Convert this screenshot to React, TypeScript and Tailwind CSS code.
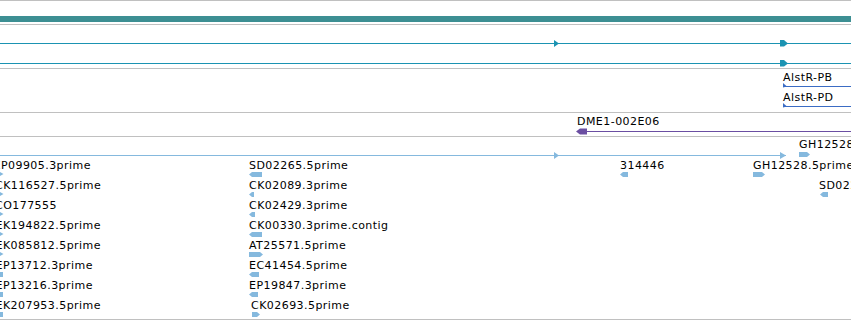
import React from "react";

type Label = { text: string; x: number; y: number };
type Glyph = { x0: number; x1: number; y: number; dir: "L" | "R" };

const BLUE_EST = "#85b9de";

function arrowPoints(g: Glyph, h = 5, head = 3): string {
  const top = g.y;
  const bot = g.y + h;
  const mid = g.y + h / 2;
  if (g.dir === "L") {
    return `${g.x0},${mid} ${g.x0 + head},${top} ${g.x1},${top} ${g.x1},${bot} ${g.x0 + head},${bot}`;
  }
  return `${g.x0},${top} ${g.x1 - head},${top} ${g.x1},${mid} ${g.x1 - head},${bot} ${g.x0},${bot}`;
}

function Labels({ items, origin }: { items: Label[]; origin: number }) {
  return (
    <>
      {items.map((l, i) => (
        <span
          key={i}
          className="absolute whitespace-nowrap text-black leading-[11px]"
          style={{ left: l.x, top: l.y - origin }}
        >
          {l.text}
        </span>
      ))}
    </>
  );
}

function Sep() {
  return <div className="h-px w-full shrink-0 bg-[#c0c0c0]" />;
}

const estLabels: Label[] = [
  { text: "GH12528.3prime", x: 799, y: 139 },
  { text: "EP09905.3prime", x: -6.5, y: 160 },
  { text: "SD02265.5prime", x: 249, y: 160 },
  { text: "314446", x: 620, y: 160 },
  { text: "GH12528.5prime", x: 753, y: 160 },
  { text: "CK116527.5prime", x: -5, y: 180 },
  { text: "CK02089.3prime", x: 249, y: 180 },
  { text: "SD02265.3prime", x: 819, y: 180 },
  { text: "CO177555", x: -5, y: 200 },
  { text: "CK02429.3prime", x: 249, y: 200 },
  { text: "EK194822.5prime", x: -4.5, y: 220 },
  { text: "CK00330.3prime.contig", x: 249, y: 220 },
  { text: "EK085812.5prime", x: -4.5, y: 240 },
  { text: "AT25571.5prime", x: 249, y: 240 },
  { text: "EP13712.3prime", x: -4.5, y: 260 },
  { text: "EC41454.5prime", x: 249, y: 260 },
  { text: "EP13216.3prime", x: -4.5, y: 280 },
  { text: "EP19847.3prime", x: 249, y: 280 },
  { text: "EK207953.5prime", x: -4.5, y: 300 },
  { text: "CK02693.5prime", x: 251, y: 300 },
];

const estGlyphs: Glyph[] = [
  { x0: 799, x1: 810, y: 152, dir: "R" },
  { x0: 249, x1: 262, y: 172, dir: "L" },
  { x0: 620, x1: 628, y: 172, dir: "L" },
  { x0: 753, x1: 765, y: 172, dir: "R" },
  { x0: 249, x1: 254, y: 192, dir: "L" },
  { x0: 820, x1: 828, y: 192, dir: "L" },
  { x0: 249, x1: 255, y: 212, dir: "L" },
  { x0: 249, x1: 262, y: 232, dir: "L" },
  { x0: 249, x1: 263, y: 252, dir: "R" },
  { x0: 249, x1: 259, y: 272, dir: "L" },
  { x0: 249, x1: 258, y: 292, dir: "L" },
  { x0: 252, x1: 260, y: 312, dir: "R" },
];

const leftTips = [172, 192, 212, 232, 252];
const leftBlocks = [272, 292, 312];

export default function App() {
  return (
    <div className="relative flex h-[320px] w-[851px] flex-col overflow-hidden bg-white font-['DejaVu_Sans',sans-serif] text-[11px] tracking-[0.45px]">
      <Sep />
      {/* Track 1: y 1..23 */}
      <div className="relative h-[23px] shrink-0">
        <div className="absolute left-0 right-0 top-[15px] h-[6px] bg-[#3d8f93]" />
      </div>
      <Sep />
      {/* Track 2: y 25..67 */}
      <div className="relative h-[43px] shrink-0">
        <svg className="absolute inset-0" width="851" height="43" shapeRendering="crispEdges">
          <g transform="translate(0,-25)" fill="#1b93b2">
            <rect x="0" y="43" width="851" height="1" />
            <rect x="0" y="63" width="851" height="1" />
            <polygon points="554,40 559,43.5 554,47" shapeRendering="auto" />
            <polygon points="780,40 784,40 788,43.5 784,46.5 780,46.5" shapeRendering="auto" />
            <polygon points="780,60 784,60 788,63.5 784,66.5 780,66.5" shapeRendering="auto" />
          </g>
        </svg>
      </div>
      <Sep />
      {/* Track 3: y 69..111 */}
      <div className="relative h-[43px] shrink-0">
        <Labels
          origin={69}
          items={[
            { text: "AlstR-PB", x: 783, y: 72 },
            { text: "AlstR-PD", x: 783, y: 92 },
          ]}
        />
        <svg className="absolute inset-0" width="851" height="43" shapeRendering="crispEdges">
          <g transform="translate(0,-69)" fill="#3b6cc4">
            <rect x="783" y="86" width="68" height="1" />
            <rect x="783" y="106" width="68" height="1" />
            <polygon points="783,83 787,86.5 783,87.5" shapeRendering="auto" />
            <polygon points="783,103 787,106.5 783,107.5" shapeRendering="auto" />
          </g>
        </svg>
      </div>
      <Sep />
      {/* Track 4: y 113..135 */}
      <div className="relative h-[23px] shrink-0">
        <Labels origin={113} items={[{ text: "DME1-002E06", x: 577, y: 116 }]} />
        <svg className="absolute inset-0" width="851" height="23" shapeRendering="crispEdges">
          <g transform="translate(0,-113)" fill="#6b4ea2">
            <rect x="584" y="131" width="267" height="1" />
            <polygon points="576,131.5 580,128.5 587,128.5 587,134.5 580,134.5" shapeRendering="auto" />
          </g>
        </svg>
      </div>
      <Sep />
      {/* Track 5: y 137..318 */}
      <div className="relative h-[182px] shrink-0">
        <Labels origin={137} items={estLabels} />
        <svg className="absolute inset-0" width="851" height="182">
          <g transform="translate(0,-137)" fill={BLUE_EST}>
            <rect x="0" y="155" width="786" height="1" shapeRendering="crispEdges" />
            <polygon points="554,152 559,155.5 554,159" />
            <polygon points="780,152 786,155.5 780,159" />
            {estGlyphs.map((g, i) => (
              <polygon key={i} points={arrowPoints(g)} />
            ))}
            {leftTips.map((y, i) => (
              <polygon key={`t${i}`} points={`0,${y} 3.5,${y + 2} 0,${y + 4}`} />
            ))}
            {leftBlocks.map((y, i) => (
              <rect key={`b${i}`} x="0" y={y} width="3" height="5" />
            ))}
          </g>
        </svg>
      </div>
      <Sep />
    </div>
  );
}
